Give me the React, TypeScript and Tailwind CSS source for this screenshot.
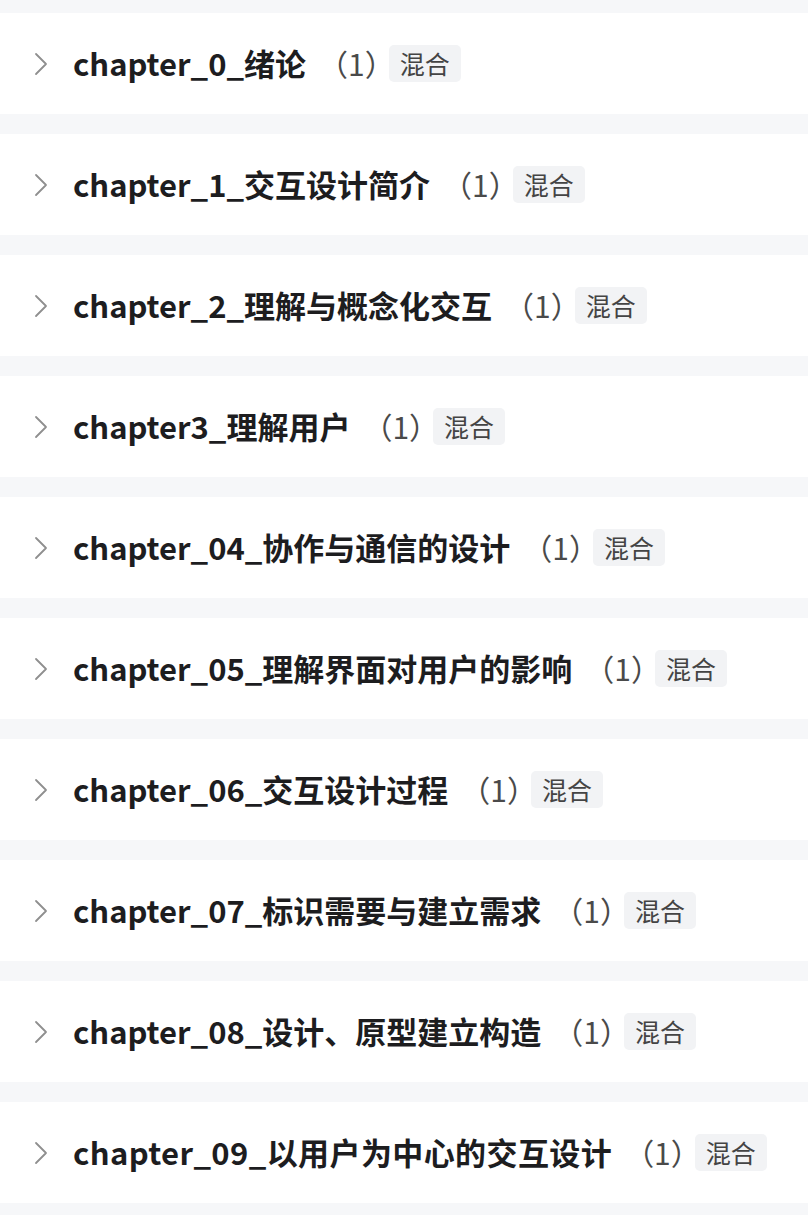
const chapters = [
  { name: "chapter_0_绪论" },
  { name: "chapter_1_交互设计简介" },
  { name: "chapter_2_理解与概念化交互" },
  { name: "chapter3_理解用户" },
  { name: "chapter_04_协作与通信的设计" },
  { name: "chapter_05_理解界面对用户的影响" },
  { name: "chapter_06_交互设计过程" },
  { name: "chapter_07_标识需要与建立需求" },
  { name: "chapter_08_设计、原型建立构造" },
  { name: "chapter_09_以用户为中心的交互设计", wide: true },
];

function Chevron() {
  return (
    <svg width="14" height="24" viewBox="0 0 14 24" fill="none" className="shrink-0">
      <path d="M2 2 L12 12 L2 22" stroke="#8f8f8f" strokeWidth="1.8" strokeLinecap="round" strokeLinejoin="round" />
    </svg>
  );
}

export default function App() {
  return (
    <div
      className="min-h-[1215px] w-[808px] bg-[#f6f7f9] pt-[13px] flex flex-col gap-[20px]"
      style={{ fontFamily: '"Noto Sans CJK SC", "Noto Sans", sans-serif' }}
    >
      {chapters.map((ch, i) => (
        <div key={i} className="h-[101px] bg-white flex items-center pl-[34px] whitespace-nowrap">
          <Chevron />
          <span
            className={
              ch.wide
                ? "ml-[25px] text-[31px] font-bold text-[#1d1d1f] tracking-[0.4px]"
                : "ml-[25px] text-[31px] font-bold text-[#1d1d1f]"
            }
          >
            {ch.name}
          </span>
          <span className="ml-[12px] text-[30px] text-[#4a4a4a]">（1）</span>
          <span className="-ml-[6px] px-[11px] h-[37px] flex items-center rounded-[5px] bg-[#f2f3f5] text-[25px] text-[#444]">
            混合
          </span>
        </div>
      ))}
    </div>
  );
}
